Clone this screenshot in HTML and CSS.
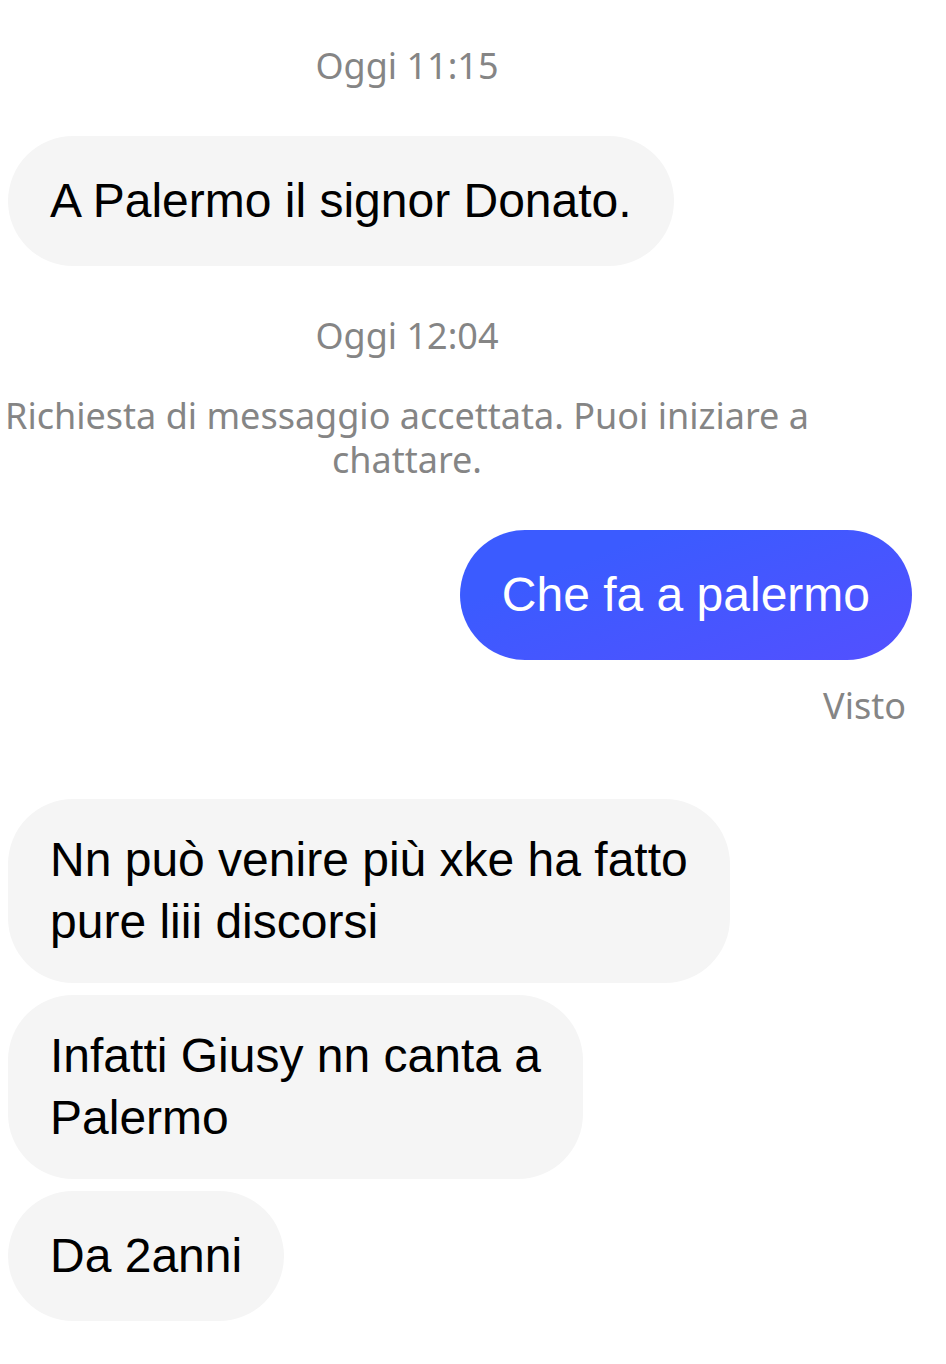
FILE: index.html
```html
<!DOCTYPE html>
<html lang="it">
<head>
    <meta charset="UTF-8">
    <meta name="viewport" content="width=device-width, initial-scale=1.0">
    <title>Chat</title>
    <link rel="stylesheet" href="styles.css">
</head>
<body>
    <main class="chat">
        <p class="notice">Oggi 11:15</p>

        <div class="group">
            <p class="bubble">A Palermo il signor Donato.</p>
        </div>

        <p class="notice">Oggi 12:04</p>
        <p class="notice notice-request">Richiesta di messaggio accettata. Puoi iniziare a chattare.</p>

        <div class="group group-sent">
            <p class="bubble bubble-sent">Che fa a palermo</p>
            <p class="status">Visto</p>
        </div>

        <div class="group">
            <p class="bubble">Nn può venire più xke ha fatto<br>pure liii discorsi</p>
            <p class="bubble">Infatti Giusy nn canta a<br>Palermo</p>
            <p class="bubble">Da 2anni</p>
        </div>
    </main>
</body>
</html>
```

FILE: styles.css
```css
body {
    margin: 0;
    background-color: #ffffff;
    color: #000000;
    font-family: "Noto Sans", "Open Sans", sans-serif;
}

p {
    margin: 0;
}

.chat {
    padding: 44px 34px 44px 0;
}

.notice {
    margin-right: 98px;
    font-size: 36px;
    line-height: 44px;
    text-align: center;
    color: #858585;
}

.notice-request {
    margin-top: 36px;
}

.group {
    display: flex;
    flex-direction: column;
    align-items: flex-start;
    gap: 12px;
    margin: 48px 0;
    padding-left: 8px;
}

.group-sent {
    align-items: flex-end;
    gap: 24px;
    margin-bottom: 71px;
}

.bubble {
    display: flex;
    align-items: center;
    box-sizing: border-box;
    min-height: 130px;
    padding: 30px 42px;
    border-radius: 65px;
    background-color: #f5f5f5;
    font-family: "Liberation Sans", Arial, sans-serif;
    font-size: 48px;
    line-height: 62px;
}

.bubble-sent {
    background-image: linear-gradient(160deg, #3b5bff 25%, #5350ff 100%);
    color: #ffffff;
}

.status {
    padding-right: 6px;
    font-size: 36px;
    line-height: 44px;
    color: #858585;
}
```
